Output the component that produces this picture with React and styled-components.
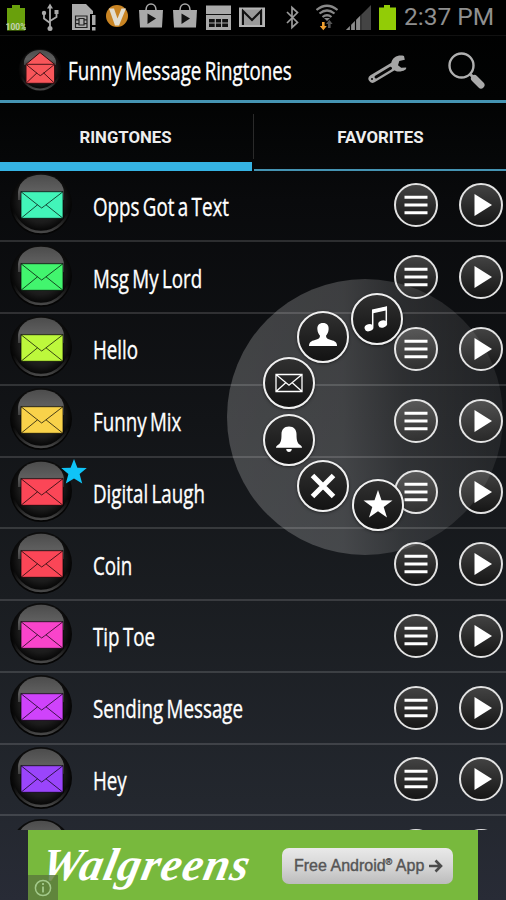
import React from 'react';
import styled, { createGlobalStyle } from 'styled-components';

const ringtones = [
  { title: 'Opps Got a Text', color: '#42f5b9' },
  { title: 'Msg My Lord', color: '#42f56e' },
  { title: 'Hello', color: '#bdf83c' },
  { title: 'Funny Mix', color: '#f9d24a' },
  { title: 'Digital Laugh', color: '#fb4657', starred: true },
  { title: 'Coin', color: '#fb4657' },
  { title: 'Tip Toe', color: '#f944cb' },
  { title: 'Sending Message', color: '#cf43fb' },
  { title: 'Hey', color: '#9a45fb' },
  { title: '', color: '#5a50fb' },
];

const STAR = 'M0 -13 L3.4 -4.2 L12.8 -4 L5.6 2 L8.2 11.5 L0 6.5 L-8.2 11.5 L-5.6 2 L-12.8 -4 L-3.4 -4.2 Z';

function Defs() {
  return (
    <Hidden width="0" height="0">
      <defs>
        <linearGradient id="gloss" x1="0" y1="0" x2="0" y2="1">
          <stop offset="0" stopColor="#4c4c4c" />
          <stop offset="0.6" stopColor="#5e5e5e" />
          <stop offset="1" stopColor="#5c5c5c" stopOpacity="0.6" />
        </linearGradient>
        <radialGradient id="ball" cx="0.5" cy="0.45" r="0.5">
          <stop offset="0" stopColor="#333" />
          <stop offset="0.7" stopColor="#1b1b1b" />
          <stop offset="0.9" stopColor="#0b0b0b" />
          <stop offset="1" stopColor="#050505" />
        </radialGradient>
        <linearGradient id="rim" x1="0" y1="0" x2="0" y2="1">
          <stop offset="0.65" stopColor="#333" stopOpacity="0" />
          <stop offset="1" stopColor="#484848" />
        </linearGradient>
      </defs>
    </Hidden>
  );
}

function Ball({ color }) {
  return (
    <svg width="62" height="62" viewBox="0 0 62 62">
      <circle cx="31" cy="31" r="31" fill="url(#ball)" />
      <circle cx="31" cy="30.5" r="28.5" fill="none" stroke="url(#rim)" strokeWidth="2.5" />
      <path d="M8 27 V19 C9 8 19 1.8 31 1.8 S53 8 54 19 V27 Z" fill="url(#gloss)" />
      <rect x="11" y="18.7" width="42" height="26.6" fill={color} stroke="rgba(0,0,0,.7)" strokeWidth="1" />
      <path
        d="M11 18.7 L29 33 L31.7 35 L34.4 33 L53 18.7 M11 45.3 L27.5 31.8 M53 45.3 L36 31.8"
        fill="none"
        stroke="rgba(0,0,0,.7)"
        strokeWidth="1"
      />
    </svg>
  );
}

function Logo() {
  return (
    <svg width="44" height="44" viewBox="0 0 44 44">
      <circle cx="22" cy="22" r="21.3" fill="url(#ball)" />
      <circle cx="22" cy="22" r="19.5" fill="none" stroke="url(#rim)" strokeWidth="2" />
      <path d="M6 17 V13 C8 6 14 2 22 2 S36 6 38 13 V17 Z" fill="url(#gloss)" />
      <path d="M8 16.3 L22 4.5 L36.6 16.3 V35.3 H8 Z" fill="#f8565a" stroke="#2a0d0f" strokeWidth="1" />
      <path
        d="M8 16.3 H36.6 M8 16.3 L20.5 26.5 L22.3 27.6 L24 26.5 L36.600 16.3 M8 35.3 L19 24.800 M36.600 35.3 L25.500 24.800"
        fill="none"
        stroke="#4a1418"
        strokeWidth="1"
      />
    </svg>
  );
}

function StatusIcons() {
  return (
    <>
      <StatusIcon $gap={6} width="20" height="36" viewBox="6 0 20 36">
        <path d="M12 5h8v3h5v22.500H7V8h5z" fill="#69a00c" />
        <text x="5.500" y="29.500" textLength="21" fontFamily="Roboto" fontSize="8.500" fontWeight="700" fill="#c3d0b0">100%</text>
      </StatusIcon>
      <StatusIcon $gap={15} width="18" height="36" viewBox="41 0 18 36">
        <g fill="none" stroke="#aaa" strokeWidth="1.800">
          <path d="M50 7V28M44 14v4.500l6 4.500M56.500 13v4l-6.500 4" />
        </g>
        <path d="M50 3.500l3 5h-6zM54.500 10h4v4h-4z" fill="#aaa" />
        <circle cx="44" cy="13" r="2.200" fill="#aaa" />
        <circle cx="50" cy="28.500" r="2.500" fill="#aaa" />
      </StatusIcon>
      <StatusIcon $gap={13} width="24" height="36" viewBox="72 0 24 36">
        <path d="M72 4h14l7 7v3h-3v16H72z" fill="#aaa" />
        <path d="M75.500 16h11.500v11.500H75.500z M79 18.500h5v6.500h-5z M75.500 19.800h3.500M75.500 23.600h3.500M84 19.800h3M84 23.600h3" fill="none" stroke="#222" strokeWidth="1.200" />
        <path d="M92 15h3.500v10H92zM92 27h3.500v3.500H92z" fill="#aaa" />
      </StatusIcon>
      <StatusIcon $gap={10} width="22" height="36" viewBox="106 0 22 36">
        <circle cx="117" cy="16" r="11" fill="#c98423" />
        <path d="M109 8.500h5l3.500 10 4-10h4.500l-7 17h-4z" fill="#e2ddd0" />
      </StatusIcon>
      {[139, 173].map((x, i) => (
        <StatusIcon key={x} $gap={i ? 10 : 11} width="24" height="36" viewBox="0 0 24 36">
          <path d="M0 10h24l-1 17.500H1z" fill="#a9a9a9" />
          <path d="M7 10c0-8 10-8 10 0" fill="none" stroke="#a9a9a9" strokeWidth="1.600" />
          <path d="M8.500 13.500l8.500 5-8.500 5.500z" fill="#111" />
        </StatusIcon>
      ))}
      <StatusIcon $gap={9} width="25" height="36" viewBox="206 0 25 36">
        <path d="M206 5.500h25V30h-25z" fill="#aaa" />
        <path d="M206 14.500h25" stroke="#111" strokeWidth="1" />
        <path d="M209 19h19v8h-19z" fill="#111" />
        <path d="M209 23h19M215.300 19v8M221.600 19v8" stroke="#aaa" strokeWidth="1.200" />
      </StatusIcon>
      <StatusIcon $gap={8} width="26" height="36" viewBox="239 0 26 36">
        <path d="M240 8.500h24v17.500h-24z" fill="#9a9a9a" stroke="#b5b5b5" strokeWidth="2" />
        <path d="M243 25V11l9 9 9-9v14" fill="none" stroke="#111" strokeWidth="2" />
      </StatusIcon>
      <StatusIcon $gap={21} width="13" height="36" viewBox="286 0 13 36">
        <path d="M287 12l10.500 10.500-5.500 5V7.500l5.500 5L287 23" fill="none" stroke="#9b9b9b" strokeWidth="1.700" />
      </StatusIcon>
      <StatusIcon $gap={17} width="22" height="36" viewBox="316 0 22 36">
        <g fill="none" stroke="#888" strokeWidth="2.200">
          <path d="M316.500 10q10.500-8.500 21 0M319.500 13.500q7.500-6 15 0M322.500 17q4.500-3.500 9 0" />
        </g>
        <path d="M324 18h6l-3 3z" fill="#888" />
        <path d="M322 22h2.600v4h2.200l-3.500 4.300-3.500-4.300h2.200z" fill="#f0a030" />
        <path d="M328 28h2.600v-4h2l-3.300-4.300-3.300 4.300h2z" fill="#555" />
      </StatusIcon>
      <StatusIcon $gap={8} width="26" height="36" viewBox="346 0 26 36">
        <path d="M346 30L371 5v25z" fill="#444" />
        <path d="M346 30L362 14v16z" fill="#8a8a8a" />
        <path d="M350.500 5v26M355.500 5v26M361 5v26" stroke="#000" strokeWidth="1.200" />
      </StatusIcon>
      <StatusIcon $gap={7} width="17" height="36" viewBox="379 0 17 36">
        <path d="M384 5h6v2.500h6V30h-17V7.500h5z" fill="#92cc06" />
      </StatusIcon>
    </>
  );
}

function MenuIcon() {
  return (
    <svg width="24" height="20" viewBox="0 0 24 20">
      <path d="M0.500 2.200h23M0.500 10h23M0.500 17.800h23" stroke="#fff" strokeWidth="3" />
    </svg>
  );
}

function PlayIcon() {
  return (
    <svg width="18" height="22" viewBox="0 0 18 22">
      <path d="M0.500 0 L18 11 L0.500 22 Z" fill="#fff" />
    </svg>
  );
}

function Row({ item }) {
  return (
    <RowWrap>
      <BallBox>
        <Ball color={item.color} />
        {item.starred && (
          <StarBadge viewBox="-13 -13 26 26">
            <path d={STAR} fill="#0fc4f7" />
          </StarBadge>
        )}
      </BallBox>
      <RowTitle>{item.title}</RowTitle>
      <RoundButton>
        <MenuIcon />
      </RoundButton>
      <RoundButton $play>
        <PlayIcon />
      </RoundButton>
    </RowWrap>
  );
}

const actions = [
  {
    x: 377, y: 319,
    icon: (
      <g fill="#fff">
        <path d="M-4.300 7.500V-8L9.300 -11.500V4" fill="none" stroke="#fff" strokeWidth="1.500" />
        <path d="M-5-9.500L10-12.800V-8.800L-5-5.500z" />
        <ellipse cx="-8" cy="8.700" rx="4.500" ry="3.500" transform="rotate(-15 -8 8.700)" />
        <ellipse cx="5.700" cy="5" rx="4.500" ry="3.500" transform="rotate(-15 5.700 5)" />
      </g>
    ),
  },
  {
    x: 322.7, y: 336.7,
    icon: <path d="M0-14c4 0 6 2.500 5.600 6.500-.2 3-1.300 4.500-2.600 6.200 0 2.300 1.500 3.300 5 4.300 4 1 6 2.500 6 6H-14c0-3.500 2-5 6-6 3.500-1 5-2 5-4.300-1.300-1.700-2.400-3.200-2.600-6.200C-6-11.500-4-14 0-14z" fill="#fff" />,
  },
  {
    x: 289, y: 383,
    icon: <path d="M-13-8.500H13V8.500H-13zM-13-8.500L0 2.200 13-8.500M-13 8.500L-3-.500M13 8.500L3-.500" fill="none" stroke="#fff" strokeWidth="1.300" />,
  },
  {
    x: 289, y: 440,
    icon: <path d="M0-13.500c5 0 7.500 3.500 7.500 7.500 0 7 1 9 3 10.500 1.500 1 2.500 1.800 2.500 3.200H-13c0-1.400 1-2.200 2.500-3.200 2-1.500 3-3.500 3-10.500 0-4 2.500-7.500 7.500-7.500zM-2.800 9H2.800c0 4-5.600 4-5.600 0z" fill="#fff" />,
  },
  {
    x: 322.7, y: 486.3,
    icon: <path d="M-10.500-10.500L10.500 10.500M10.500-10.500L-10.500 10.500" stroke="#fff" strokeWidth="5" />,
  },
  { x: 377.6, y: 504.7, icon: <path d="M0-15L3.500-4.800 14.500-4.600 5.700 2 9 12.600 0 6.300-9 12.600-5.700 2-14.500-4.600-3.500-4.800Z" fill="#fff" /> },
];

export default function App() {
  return (
    <Page>
      <GlobalStyle />
      <Defs />
      <StatusBar>
        <StatusIcons />
        <Clock>2:37 PM</Clock>
      </StatusBar>
      <ActionBar>
        <Logo />
        <AppTitle>Funny Message Ringtones</AppTitle>
        <svg width="40" height="30" viewBox="0 0 40 30">
          <path d="M4.500 23.800L25 11.500" stroke="#a5a5a5" strokeWidth="8" strokeLinecap="round" />
          <path d="M36 1C31-.500 24 1.500 23.200 8.500c0 6 5 9.500 11 7.500 2-.600 3.500-1.200 4-2.600V12.500l-5 .200-3.200-2.400L31.300 6l5.500-1.300z" fill="#a5a5a5" />
          <path d="M8 22L22.500 13.300" stroke="#050505" strokeWidth="3" strokeLinecap="round" />
          <circle cx="4" cy="24" r="1" fill="#050505" />
        </svg>
        <SearchIcon viewBox="0 0 38 38">
          <circle cx="13.500" cy="13.500" r="12" fill="none" stroke="#b0b0b0" strokeWidth="2.400" />
          <path d="M22 22l4.500 4.500" stroke="#aaa" strokeWidth="3" />
          <path d="M26.500 26.500l6.500 6.500" stroke="#aaa" strokeWidth="7" strokeLinecap="round" />
        </SearchIcon>
      </ActionBar>
      <Tabs>
        <Tab $active>
          <TabLabel>RINGTONES</TabLabel>
        </Tab>
        <TabDivider />
        <Tab>
          <TabLabel>FAVORITES</TabLabel>
        </Tab>
      </Tabs>
      <List>
        {ringtones.map((item) => (
          <Row key={item.color + item.title} item={item} />
        ))}
      </List>
      <AdBar>
        <Ad>
          <Brand>Walgreens</Brand>
          <AdButton>
            <AdText>
              Free Android<sup>®</sup> App
            </AdText>
            <svg width="14" height="14" viewBox="0 0 14 14">
              <path d="M0 7h11M6.500 1.500L12 7l-5.500 5.500" fill="none" stroke="#4c4c4c" strokeWidth="2.600" />
            </svg>
          </AdButton>
          <InfoBadge>
            <svg width="18" height="18" viewBox="0 0 18 18">
              <circle cx="9" cy="9" r="7.600" fill="none" stroke="#a2c98a" strokeWidth="1.500" />
              <path d="M9 4v2M9 7.500V13.500" stroke="#a2c98a" strokeWidth="1.800" />
            </svg>
          </InfoBadge>
        </Ad>
      </AdBar>
      <Halo />
      {actions.map((a) => (
        <ActionButton key={`${a.x}-${a.y}`} style={{ left: a.x - 26, top: a.y - 26 }}>
          <svg width="32" height="32" viewBox="-16 -16 32 32">
            {a.icon}
          </svg>
        </ActionButton>
      ))}
    </Page>
  );
}

const GlobalStyle = createGlobalStyle`
  * { box-sizing: border-box; }
  body { margin: 0; background: #000; }
  svg { display: block; flex: none; }
`;

const Hidden = styled.svg`
  position: absolute;
`;

const Page = styled.div`
  position: relative;
  width: 506px;
  height: 900px;
  overflow: hidden;
  display: flex;
  flex-direction: column;
  background: linear-gradient(#000 0, #020303 100px, #090a0c 200px, #121417 420px, #1a1d21 600px, #23272e 800px, #282b36 900px);
  color: #fff;
  font-family: 'Open Sans', sans-serif;
`;

const StatusBar = styled.div`
  height: 36px;
  display: flex;
  flex: none;
  background: #000;
  border-bottom: 1px solid #111;
`;

const StatusIcon = styled.svg`
  margin-left: ${(p) => p.$gap}px;
`;

const Clock = styled.span`
  margin-left: 8px;
  font: 400 24.5px/34px Roboto, sans-serif;
  color: #8f8f8f;
  white-space: nowrap;
`;

const ActionBar = styled.div`
  height: 67px;
  flex: none;
  display: flex;
  align-items: center;
  padding: 3px 0 0 18px;
  border-bottom: 3px solid #4594b3;
`;

const CondensedText = styled.div`
  font-size: 24.7px;
  line-height: 34px;
  font-weight: 400;
  word-spacing: -2px;
  white-space: nowrap;
  -webkit-text-stroke: 0.35px #fff;
  transform: scaleX(0.76);
  transform-origin: 0 50%;
`;

const AppTitle = styled(CondensedText)`
  width: 300px;
  margin-left: 6px;
  padding-top: 2px;
`;

const SearchIcon = styled.svg`
  width: 38px;
  height: 38px;
  margin: 2px 0 0 40px;
`;

const Tabs = styled.div`
  height: 67.5px;
  flex: none;
  display: flex;
`;

const Tab = styled.div`
  flex: 1;
  display: flex;
  align-items: center;
  justify-content: center;
  padding-top: ${(p) => (p.$active ? 9 : 3)}px;
  border-bottom: ${(p) => (p.$active ? '9px solid #35b3e4' : '2.5px solid #4593b2')};
`;

const TabDivider = styled.div`
  width: 1px;
  height: 45px;
  margin: 11px 0 0 1px;
  background: #2a2a2a;
`;

const TabLabel = styled.span`
  font: 700 17.3px/20px Roboto, sans-serif;
  color: #eee;
  transform: scaleX(0.97);
`;

const List = styled.div`
  height: 659px;
  flex: none;
  overflow: hidden;
`;

const RowWrap = styled.div`
  height: 71.75px;
  display: flex;
  align-items: center;
  padding: 0 3.3px 0 10px;
  border-bottom: 2px solid rgba(255, 255, 255, 0.14);
`;

const BallBox = styled.div`
  position: relative;
  width: 62px;
  height: 62px;
  margin-bottom: 3px;
`;

const StarBadge = styled.svg`
  position: absolute;
  left: 51px;
  top: -1px;
  width: 26px;
  height: 26px;
`;

const RowTitle = styled(CondensedText)`
  flex: 1;
  margin-left: 21px;
  padding-top: 3px;
`;

const RoundButton = styled.div`
  width: 44px;
  height: 44px;
  flex: none;
  margin-left: ${(p) => (p.$play ? 20.4 : 0)}px;
  padding-left: ${(p) => (p.$play ? 4 : 0)}px;
  display: flex;
  align-items: center;
  justify-content: center;
  border: 2px solid #e2e2e2;
  border-radius: 50%;
  background: linear-gradient(#424242, #161616);
`;

const Halo = styled.div`
  position: absolute;
  left: 227px;
  top: 279px;
  width: 276px;
  height: 276px;
  border-radius: 50%;
  background: linear-gradient(90deg, rgba(255, 255, 255, 0.21) 0, rgba(255, 255, 255, 0.2) 42%, rgba(255, 255, 255, 0.12) 64%, rgba(255, 255, 255, 0.07) 100%);
`;

const ActionButton = styled.div`
  position: absolute;
  width: 52px;
  height: 52px;
  display: flex;
  align-items: center;
  justify-content: center;
  border: 2px solid #f0f0f0;
  border-radius: 50%;
  background: linear-gradient(#303030, #131313);
  box-shadow: 0 1px 3px rgba(0, 0, 0, 0.5);
`;

const AdBar = styled.div`
  flex: 1;
  display: flex;
  padding: 0 28px;
`;

const Ad = styled.div`
  position: relative;
  flex: 1;
  display: flex;
  align-items: flex-start;
  background: #78b93d;
`;

const Brand = styled.div`
  width: 238px;
  padding: 10px 0 0 15px;
  font: italic 700 46px/50px 'Liberation Serif', serif;
  letter-spacing: 1.1px;
  color: #fff;
  white-space: nowrap;
  transform: skewX(-12deg);
`;

const AdButton = styled.div`
  width: 171px;
  height: 36px;
  margin: 18px 0 0 16px;
  display: flex;
  align-items: center;
  gap: 5px;
  padding-left: 12px;
  border-radius: 7px;
  background: linear-gradient(#e9e9e9, #d6d6d6 50%, #bcbcbc);
`;

const AdText = styled.span`
  font: 400 16px/20px 'Liberation Sans', sans-serif;
  color: #555;
  -webkit-text-stroke: 0.4px #555;
  white-space: nowrap;

  sup {
    font-size: 9px;
    line-height: 0;
  }
`;

const InfoBadge = styled.div`
  position: absolute;
  left: 0;
  bottom: 0;
  width: 30px;
  height: 25px;
  display: flex;
  align-items: center;
  justify-content: center;
  background: rgba(90, 120, 60, 0.8);
`;
